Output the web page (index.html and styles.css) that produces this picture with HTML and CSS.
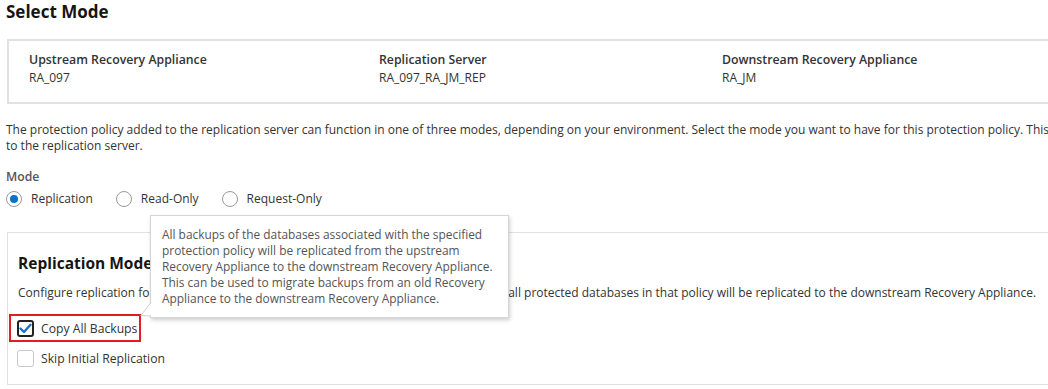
FILE: index.html
```html
<!DOCTYPE html>
<html lang="en">
<head>
  <meta charset="UTF-8">
  <title>Select Mode</title>
  <link rel="stylesheet" href="styles.css">
</head>
<body>
  <div class="page">
    <h2 class="page-title">Select Mode</h2>

    <div class="summary-box">
      <div class="summary-item">
        <div class="summary-label">Upstream Recovery Appliance</div>
        <div class="summary-value">RA_097</div>
      </div>
      <div class="summary-item">
        <div class="summary-label">Replication Server</div>
        <div class="summary-value">RA_097_RA_JM_REP</div>
      </div>
      <div class="summary-item">
        <div class="summary-label">Downstream Recovery Appliance</div>
        <div class="summary-value">RA_JM</div>
      </div>
    </div>

    <p class="intro">
      <span class="line">The protection policy added to the replication server can function in one of three modes, depending on your environment. Select the mode you want to have for this protection policy. This mode is applied</span>
      <span class="line">to the replication server.</span>
    </p>

    <div class="field">
      <div class="field-label">Mode</div>
      <div class="radio-group">
        <label class="radio checked"><span class="radio-dot"></span>Replication</label>
        <label class="radio"><span class="radio-dot"></span>Read-Only</label>
        <label class="radio"><span class="radio-dot"></span>Request-Only</label>
      </div>
    </div>

    <div class="mode-box">
      <h3 class="mode-title">Replication Mode</h3>
      <p class="mode-desc">Configure replication for this policy. When Copy All Backups is selected, the backups for all protected databases in that policy will be replicated to the downstream Recovery Appliance.</p>

      <div class="check-list">
        <label class="check checked highlight">
          <span class="check-box">
            <svg width="13" height="11" viewBox="0 0 13 11"><path d="M1.5 5.5 L5 9 L11.5 1.8" fill="none" stroke="#1a74c4" stroke-width="2.4" stroke-linecap="round" stroke-linejoin="round"/></svg>
          </span>
          Copy All Backups
        </label>
        <label class="check">
          <span class="check-box"></span>
          Skip Initial Replication
        </label>
      </div>

      <div class="tooltip">
        <span class="line">All backups of the databases associated with the specified</span>
        <span class="line">protection policy will be replicated from the upstream</span>
        <span class="line">Recovery Appliance to the downstream Recovery Appliance.</span>
        <span class="line">This can be used to migrate backups from an old Recovery</span>
        <span class="line">Appliance to the downstream Recovery Appliance.</span>
        <svg class="tooltip-arrow" width="12" height="16" viewBox="0 0 12 16"><path d="M11 0.5 L0.8 13.5 L11 14" fill="#fff" stroke="#cfcfcf" stroke-width="1"/></svg>
      </div>
    </div>
  </div>
</body>
</html>
```

FILE: styles.css
```css
body {
  margin: 0;
  overflow: hidden;
  font-family: 'Open Sans', 'Noto Sans', sans-serif;
  color: #333;
  background: #fff;
}

.page {
  width: 1130px;
  padding: 0 0 0 6px;
}

.line {
  display: block;
  white-space: nowrap;
}

.page-title {
  font-size: 17px;
  font-weight: 700;
  color: #161513;
  margin: 0;
  line-height: 24px;
}

.summary-box {
  display: flex;
  box-sizing: border-box;
  height: 65px;
  margin: 15px 0 0 1px;
  border: 2px solid #e2e2e2;
  padding: 10px 20px 0;
}

.summary-item:nth-child(1) { width: 350px; }
.summary-item:nth-child(2) { width: 343px; }

.summary-label {
  font-size: 12.3px;
  font-weight: 600;
  color: #333;
  line-height: 18px;
}

.summary-value {
  font-size: 12px;
  color: #333;
  line-height: 18px;
}

.intro {
  font-size: 12px;
  line-height: 16px;
  margin: 18px 0 0;
}

.field {
  margin-top: 14px;
}

.field-label {
  font-size: 12.2px;
  font-weight: 600;
  color: #555;
  line-height: 18px;
}

.radio-group {
  display: flex;
  gap: 23px;
  margin-top: 4px;
}

.radio {
  display: flex;
  align-items: center;
  gap: 9px;
  font-size: 12px;
  color: #333;
  line-height: 18px;
}

.radio-dot {
  width: 14px;
  height: 14px;
  border: 1px solid #9a9a9a;
  border-radius: 50%;
  display: flex;
  align-items: center;
  justify-content: center;
}

.radio.checked .radio-dot::after {
  content: "";
  width: 8px;
  height: 8px;
  border-radius: 50%;
  background: #0b72c9;
}

.mode-box {
  position: relative;
  margin: 24px 0 0 1px;
  border: 1px solid #e2e2e2;
  border-right: none;
  padding: 18px 10px 12px;
}

.mode-title {
  font-size: 15.5px;
  font-weight: 700;
  color: #161513;
  margin: 0;
  line-height: 24px;
}

.mode-desc {
  font-size: 12px;
  margin: 9px 0 0;
  line-height: 18px;
  white-space: nowrap;
}

.check-list {
  margin-top: 12px;
  display: flex;
  flex-direction: column;
  align-items: flex-start;
  gap: 2px;
}

.check {
  display: flex;
  align-items: center;
  box-sizing: border-box;
  height: 28px;
  gap: 7px;
  font-size: 12.2px;
  color: #333;
  padding: 0 2px 0 6px;
  margin-left: -9px;
  border: 2px solid transparent;
}

.check.highlight {
  border-color: #e31b23;
}

.check-box {
  box-sizing: border-box;
  width: 17px;
  height: 17px;
  border: 1px solid #c8c8c8;
  border-radius: 3px;
  display: flex;
  align-items: center;
  justify-content: center;
}

.check.checked .check-box {
  border: 2px solid #222;
}

.tooltip {
  position: absolute;
  left: 142px;
  top: -18px;
  width: 334px;
  padding: 10px 12px 11px 11px;
  background: #fff;
  border: 1px solid #d6d6d6;
  box-shadow: 1px 2px 4px rgba(0, 0, 0, 0.2);
  font-size: 11.9px;
  line-height: 16px;
  color: #555;
}

.tooltip-arrow {
  position: absolute;
  left: -11px;
  bottom: -1px;
}
```
